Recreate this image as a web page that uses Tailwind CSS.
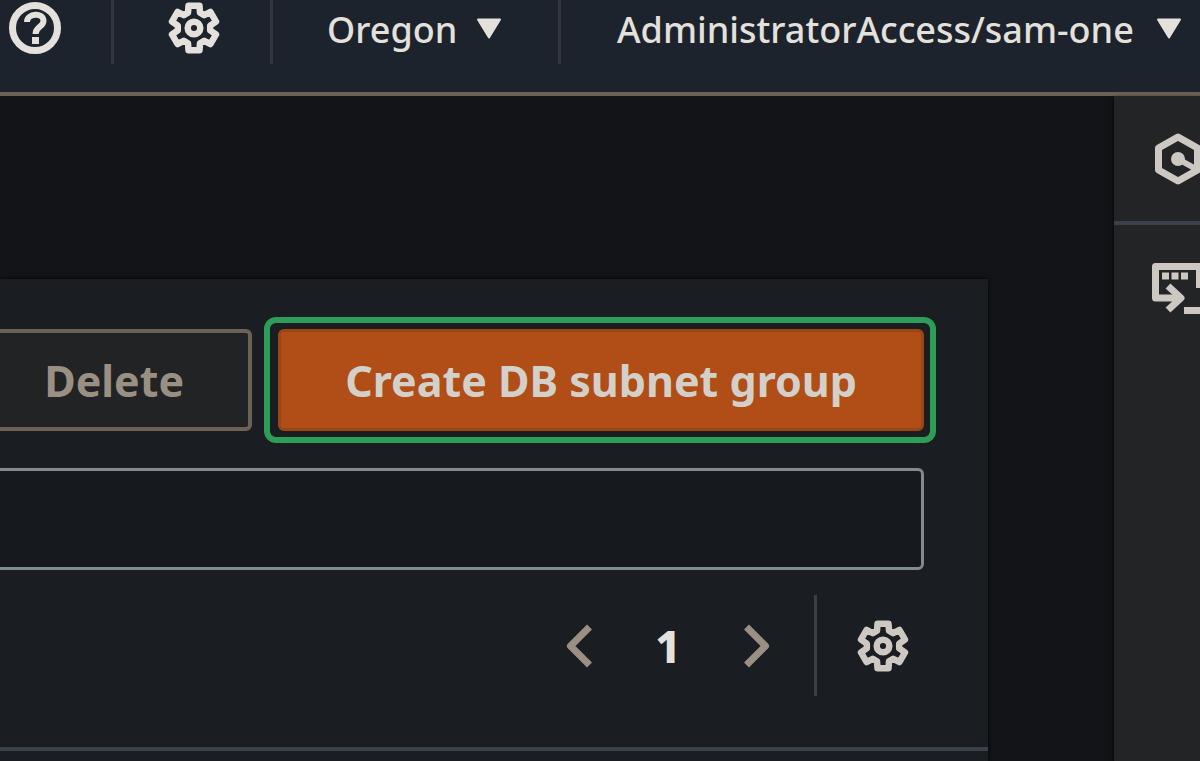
<!DOCTYPE html>
<html lang="en">
<head>
  <meta charset="UTF-8" />
  <meta name="viewport" content="width=device-width, initial-scale=1.0" />
  <title>Subnet groups</title>
  <script src="https://cdn.jsdelivr.net/npm/@tailwindcss/browser@4"></script>
</head>
<body class="h-screen overflow-hidden flex flex-col bg-[#131418] font-['Noto_Sans',sans-serif] text-[#e4e1dc]">

  <!-- shared gear icon -->
  <svg class="hidden">
    <symbol id="gear" viewBox="-26 -26 52 52">
      <path fill="none" stroke="currentColor" stroke-width="6.5" stroke-linejoin="round" d="M-6-15.2-5.5-22.3H5.5L6-15.2 10.2-12.8 16.5-16 22-6.4 16.2-2.4V2.4L22 6.4 16.5 16 10.2 12.8 6 15.2 5.5 22.3H-5.5L-6 15.2-10.2 12.8-16.5 16-22 6.4-16.2 2.4V-2.4L-22-6.4-16.5-16-10.2-12.8Z" />
      <circle r="6.3" fill="none" stroke="currentColor" stroke-width="6.5" />
    </symbol>
  </svg>

  <!-- TOP NAV -->
  <header class="shrink-0 flex h-24 bg-[#1c232d] border-b-4 border-[#6b6155] text-[36px] leading-none font-medium">
    <button aria-label="Help" class="shrink-0 flex items-center h-16 w-[114px] pl-2 pb-2 border-r-3 border-[#333638]">
      <svg class="size-[54px]" viewBox="-27 -27 54 54" fill="none" stroke="currentColor">
        <circle r="22.5" stroke-width="7" />
        <path stroke-width="6" d="M-8-6C-8-15 8.5-16 8.5-7 8.5-1 .5-1.5 .5 6" />
        <path stroke-width="7" d="M-3 12.5H4" />
      </svg>
    </button>
    <button aria-label="Settings" class="shrink-0 flex items-center h-16 w-[159px] pb-2 pl-[54px] border-r-3 border-[#333638]">
      <svg class="size-[52px]"><use href="#gear" /></svg>
    </button>
    <button class="shrink-0 flex items-center justify-between h-16 w-[288px] pb-2 pl-[54px] pr-14 border-r-3 border-[#333638]">
      <span class="pt-1">Oregon</span>
      <svg class="w-[26px] h-[21px]" viewBox="0 0 26 21" fill="currentColor" stroke="currentColor" stroke-width="2" stroke-linejoin="round"><path d="M2 1.5H24L13 19.5Z" /></svg>
    </button>
    <button class="flex flex-1 items-center justify-between h-16 pb-2 pl-14 pr-[18px] whitespace-nowrap">
      <span class="pt-1">AdministratorAccess/sam-one</span>
      <svg class="shrink-0 w-[26px] h-[21px]" viewBox="0 0 26 21" fill="currentColor" stroke="currentColor" stroke-width="2" stroke-linejoin="round"><path d="M2 1.5H24L13 19.5Z" /></svg>
    </button>
  </header>

  <div class="flex flex-1 min-h-0">

    <!-- CONTENT -->
    <main class="flex-1 min-w-0 flex pt-[183px] pr-[126px]">
      <section class="flex-1 min-w-0 bg-[#1a1d22] shadow-[0_0_4px_#000]">
        <div class="pt-[38px] pr-16">
          <div class="flex justify-end items-center gap-3 -mr-3 text-[43px] leading-none font-bold">
            <button class="shrink-0 h-[102px] px-16 border-4 border-[#6b6155] rounded-md bg-[#222325] text-[#999083]">Delete</button>
            <div class="shrink-0 p-1.5 pl-2 border-6 border-[#2d9d57] rounded-xl">
              <button class="h-[102px] px-16 border-3 border-[#9c4614] rounded-md bg-[#b14d16] text-[#d3cfc9] whitespace-nowrap">Create DB subnet group</button>
            </div>
          </div>
          <input type="text" aria-label="Filter subnet groups" class="block w-[calc(100%+16px)] -ml-4 mt-[25px] h-[102px] px-8 border-3 border-[#7f8b8c] rounded-md bg-[#16191d] text-4xl outline-none" />
        </div>
        <div class="flex justify-end items-center mt-[25px] pr-[79px] text-[#cdc9c2]">
          <button aria-label="Previous page" class="text-[#999083]">
            <svg class="w-7 h-11" viewBox="0 0 28 44" fill="none" stroke="currentColor" stroke-width="7"><path d="M24.5 3 5.5 22 24.5 41" stroke-linejoin="round" /></svg>
          </button>
          <button class="w-[150px] text-[44px] leading-none font-extrabold text-[#e4e1dc]">1</button>
          <button aria-label="Next page" class="text-[#999083]">
            <svg class="w-7 h-11" viewBox="0 0 28 44" fill="none" stroke="currentColor" stroke-width="7"><path d="M3.5 3 22.5 22 3.5 41" stroke-linejoin="round" /></svg>
          </button>
          <div class="w-[3px] h-[101px] ml-[43px] mr-10 bg-[#3a3f47]"></div>
          <button aria-label="Preferences">
            <svg class="size-[52px]"><use href="#gear" /></svg>
          </button>
        </div>
        <div class="mt-[51px] border-t-4 border-[#3a4149]"></div>
      </section>
    </main>

    <!-- RIGHT TOOLBAR -->
    <aside class="shrink-0 w-[86px] overflow-hidden bg-[#222426] shadow-[0_2px_4px_#000] text-[#cdc9c2]">
      <button aria-label="Resources" class="block w-full h-[129px] pl-[38px] border-b-4 border-[#3a4149]">
        <svg class="w-[52px] h-[54px]" viewBox="-26 -27 52 54" fill="none" stroke="currentColor" stroke-width="7" stroke-linejoin="round">
          <path d="M0-22 19.5-11V11L0 22-19.5 11V-11Z" />
          <path stroke-width="6" d="M0 0 18 10" />
          <circle r="7" fill="currentColor" stroke="none" />
        </svg>
      </button>
      <button aria-label="Shell" class="block w-full h-[124px] pl-9">
        <svg class="w-[52px] h-[54px]" viewBox="0 0 52 54" fill="none" stroke="currentColor" stroke-width="7">
          <path stroke-linejoin="round" d="M29 38H5.5V6.5H49.5V28" />
          <path stroke-linejoin="round" d="M18 26 31 38 18 50" />
          <path d="M12 16H19M21.5 16H28.5M31 16H38M34 50.5H52" />
        </svg>
      </button>
    </aside>
  </div>
</body>
</html>
